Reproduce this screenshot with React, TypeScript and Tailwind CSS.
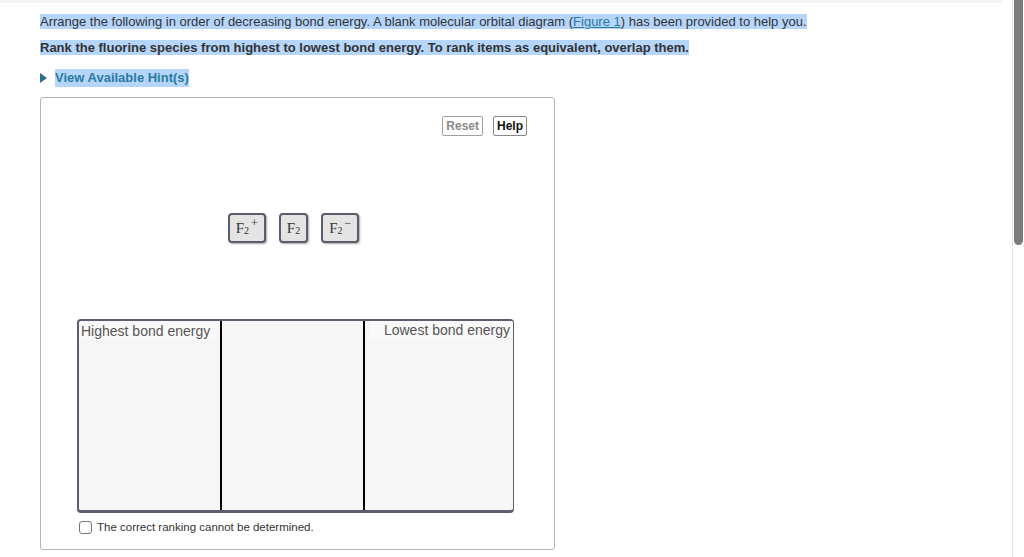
import React from 'react';

const SANS = { fontFamily: '"Liberation Sans", Arial, sans-serif' };

function Chip({ sup }: { sup?: string }) {
  return (
    <div className="flex h-[30px] items-center justify-center rounded-[4px] border-2 border-[#5c5c6c] bg-[#e4e4e4] px-[6px] text-[15px] leading-none text-[#333] shadow-[1px_1px_2px_rgba(0,0,0,0.35)] [font-family:'Liberation_Serif',serif]">
      <span>F</span>
      <span className="relative top-[3px] text-[10px]">2</span>
      {sup && <span className="relative -top-[5px] ml-[2px] text-[12px]">{sup}</span>}
    </div>
  );
}

export default function App() {
  return (
    <div className="flex h-[557px] w-[1024px] overflow-hidden bg-white text-[#333]" style={SANS}>
      <div className="flex-1">
        <div className="h-[3px] w-[1002px] bg-[#f4f4f4]" />
        <div className="pl-[40px] pt-[10px]">
          <p className="text-[13px] leading-[17px]">
            <span className="bg-[#b5d5fb]">
              Arrange the following in order of decreasing bond energy. A blank molecular orbital diagram (
              <span className="text-[#2a7ba0] underline">Figure 1</span>) has been provided to help you.
            </span>
          </p>
          <p className="mt-[9px] text-[13px] font-bold leading-[17px]">
            <span className="bg-[#b5d5fb]">
              Rank the fluorine species from highest to lowest bond energy. To rank items as equivalent, overlap them.
            </span>
          </p>
          <div className="mt-[13px] flex items-center gap-[8px] text-[13px] font-bold leading-[18px]">
            <svg width="7" height="10" viewBox="0 0 7 10">
              <path d="M0 0 L7 5 L0 10 Z" fill="#2a6f90" />
            </svg>
            <span className="bg-[#b5d5fb] text-[#2a7ba0]">View Available Hint(s)</span>
          </div>

          <div className="mt-[10px] flex h-[453px] w-[515px] flex-col rounded-[3px] border border-[#b4b4b4] pl-[36px] pr-[40px]">
            <div className="mr-[-13px] mt-[18px] flex justify-end gap-[10px] text-[12px] font-bold">
              <button className="h-[20px] rounded-[2px] border border-[#a0a0a0] bg-white px-[3px] text-[#8a8a8a]">Reset</button>
              <button className="h-[20px] rounded-[2px] border border-[#888] bg-white px-[3px] text-[#111]">Help</button>
            </div>
            <div className="mt-[77px] flex justify-center gap-[13px] pr-[4px]">
              <Chip sup="+" />
              <Chip />
              <Chip sup="−" />
            </div>
            <div className="mt-[76px] flex h-[194px] overflow-hidden rounded-[4px] border-2 border-b-[3px] border-r-[1.5px] border-[#5d5d6d] bg-[#f6f6f6] text-[14px] text-[#555]">
              <div className="w-[143px] border-r-2 border-black">
                <span className="inline-block bg-[#f9f9f9] pl-[2px] pr-[6px] pt-[1px] leading-[17px]">Highest bond energy</span>
              </div>
              <div className="w-[143px] border-r-2 border-black" />
              <div className="flex flex-1 justify-end">
                <span className="inline-block h-fit bg-[#f9f9f9] pl-[14px] pr-[3px] pt-[1px] leading-[17px]">Lowest bond energy</span>
              </div>
            </div>
            <label className="mt-[6px] flex items-center gap-[5px] text-[11.5px] text-[#333]">
              <span className="ml-[2px] h-[13px] w-[13px] rounded-[3px] border border-[#777] bg-white" />
              The correct ranking cannot be determined.
            </label>
          </div>
        </div>
      </div>
      <div className="flex w-[12px] border-l border-[#e2e2e2] pl-[1px]">
        <div className="h-[245px] w-[9px] rounded-b-[5px] bg-[#7b7b7b]" />
      </div>
    </div>
  );
}
